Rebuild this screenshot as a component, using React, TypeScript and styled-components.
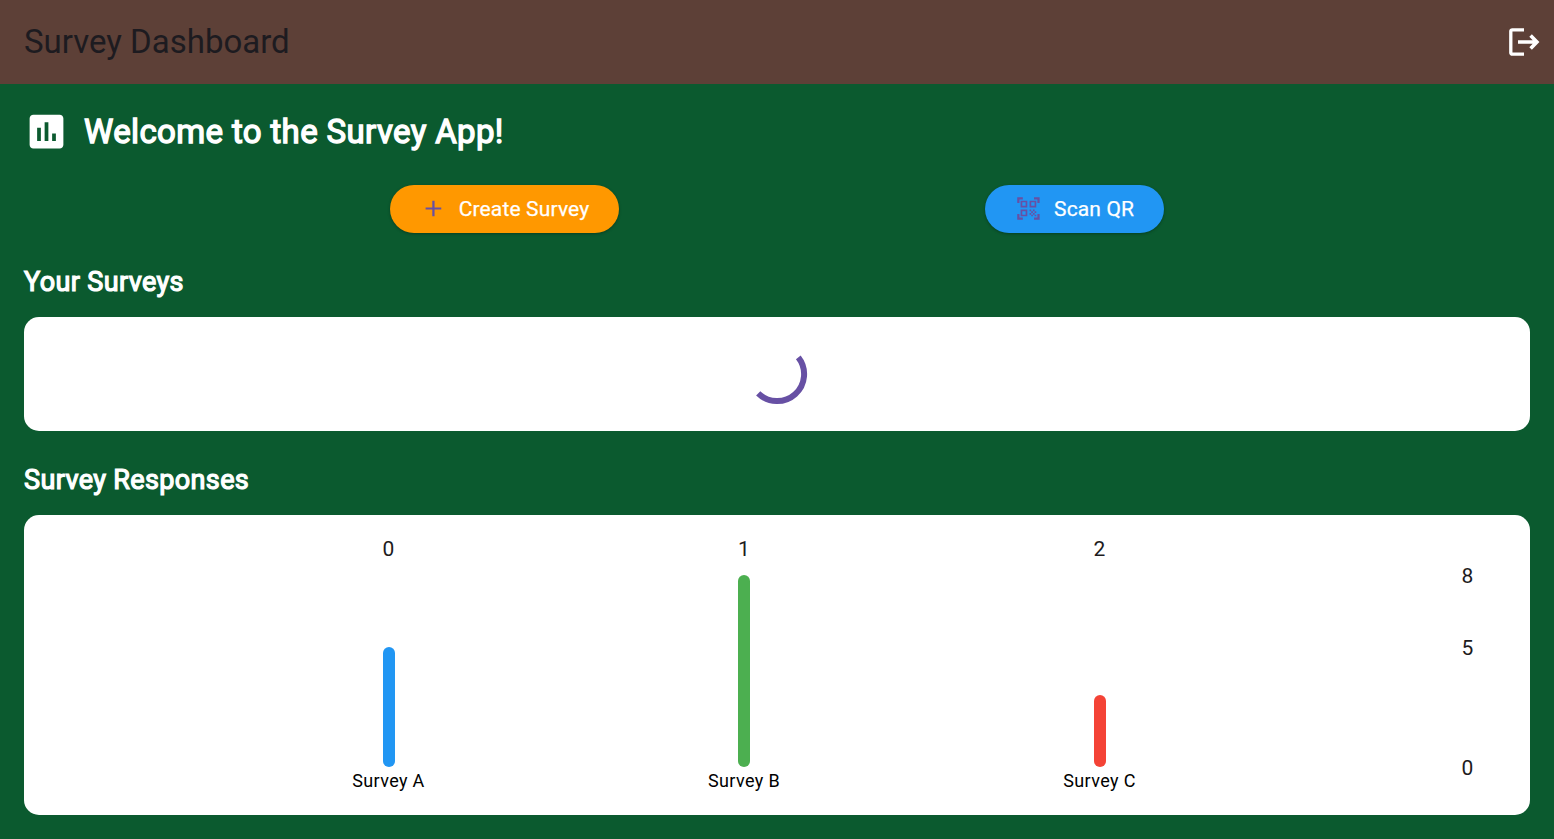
import React from "react";
import styled, { createGlobalStyle } from "styled-components";

const Global = createGlobalStyle`
  * { box-sizing: border-box; }
  body { margin: 0; background: #0b5a2f; font-family: Roboto, "Liberation Sans", sans-serif; }
`;
const Page = styled.div`
  width: 100%; height: 839px; display: flex; flex-direction: column; overflow: hidden;
  background: #0b5a2f;
`;
const AppBar = styled.header`
  height: 84px; padding: 0 12px 0 24px; display: flex; align-items: center; justify-content: space-between;
  background: #5d4037; color: #1d1b20;
`;
const Title = styled.h1`
  margin: 0; font-size: 33px; line-height: 42px; font-weight: 400; white-space: nowrap;
`;
const IconButton = styled.button`
  border: 0; padding: 0; background: none; width: 36px; height: 36px; display: flex; color: #fff;
`;
const Main = styled.main`
  padding: 24px; display: flex; flex-direction: column;
`;
const Welcome = styled.div`
  height: 47px; display: flex; align-items: center; gap: 15px; color: #fff;
`;
const WelcomeText = styled.h2`
  margin: 0; font-size: 33px; line-height: 47px; font-weight: 400; letter-spacing: 0.36px;
  -webkit-text-stroke: 1.35px #fff; white-space: nowrap;
`;
const Actions = styled.div`
  margin-top: 29px; padding-top: 0.5px; height: 49px; display: flex; justify-content: space-evenly;
`;
const Action = styled.button<{ $color: string; $width: number; $gap: number }>`
  width: ${p => p.$width}px; height: 48px; padding: 0 30px; border: 0; border-radius: 24px;
  display: flex; align-items: center; justify-content: center; gap: ${p => p.$gap}px;
  background: ${p => p.$color}; color: #fff; font: 400 21px Roboto, sans-serif; letter-spacing: 0.15px;
  -webkit-text-stroke: 0.25px #fff;
  box-shadow: 0 1px 3px rgba(0,0,0,.3); white-space: nowrap;
`;
const SectionTitle = styled.h3<{ $top: number }>`
  margin: ${p => p.$top}px 0 17px; height: 35px; font-size: 27px; line-height: 35px; font-weight: 400;
  letter-spacing: 0.36px; color: #fff; -webkit-text-stroke: 1.2px #fff;
`;
const Card = styled.section<{ $height: number }>`
  height: ${p => p.$height}px; border-radius: 15px; background: #fff; display: flex; justify-content: center;
`;
const Chart = styled.div`
  flex: 1; display: flex; padding: 20px 24px 20px; color: #1d1b20;
`;
const Bars = styled.div`
  flex: 1; display: flex; justify-content: space-evenly;
`;
const Column = styled.div`
  width: 30px; display: flex; flex-direction: column; align-items: center;
`;
const Value = styled.div`
  height: 28px; font-size: 21px; line-height: 28px;
`;
const Track = styled.div`
  height: 204px; display: flex; align-items: flex-end;
`;
const Bar = styled.div<{ $color: string }>`
  width: 12px; border-radius: 6px; background: ${p => p.$color};
`;
const Label = styled.div`
  font-size: 18px; line-height: 28px; letter-spacing: 0.35px; color: #000; white-space: nowrap;
`;
const Axis = styled.div`
  width: 66px; padding: 27px 0 0 21.5px; display: flex; flex-direction: column; font-size: 21px; line-height: 28px;
`;
const Tick = styled.div<{ $height: number }>`
  height: ${p => p.$height}px;
`;

const data = [
  { name: "Survey A", value: 5, color: "#2196f3" },
  { name: "Survey B", value: 8, color: "#4caf50" },
  { name: "Survey C", value: 3, color: "#f44336" },
];

export default function App() {
  return (
    <Page>
      <Global />
      <AppBar>
        <Title>Survey Dashboard</Title>
        <IconButton aria-label="Log out">
          <svg width="36" height="36" viewBox="0 0 36 36" fill="none" stroke="currentColor" strokeWidth="3.300">
            <path d="M18 5.800H6.300a1.500 1.500 0 0 0-1.500 1.500V28.700A1.500 1.500 0 0 0 6.300 30.200H18" />
            <path d="M12 18H30M24.600 11.600L30.900 18L24.600 24.400" strokeWidth="3.600" />
          </svg>
        </IconButton>
      </AppBar>
      <Main>
        <Welcome>
          <svg width="45" height="45" viewBox="0 0 24 24" fill="currentColor">
            <path d="M19 3H5c-1.100 0-2 .9-2 2v14c0 1.100.9 2 2 2h14c1.100 0 2-.9 2-2V5c0-1.100-.9-2-2-2zM9 17H7v-7h2v7zm4 0h-2V7h2v10zm4 0h-2v-4h2v4z" />
          </svg>
          <WelcomeText>Welcome to the Survey App!</WelcomeText>
        </Welcome>
        <Actions>
          <Action $color="#ff9800" $width={229.5} $gap={12}>
            <svg width="27" height="27" viewBox="0 0 24 24" fill="#6750a4"><path d="M19 13h-6v6h-2v-6H5v-2h6V5h2v6h6v2z" /></svg>
            Create Survey
          </Action>
          <Action $color="#2196f3" $width={179} $gap={12}>
            <svg width="27" height="27" viewBox="0 0 24 24" fill="#6750a4"><path d="M9.5 6.5v3h-3v-3h3M11 5H5v6h6V5zm-1.500 9.500v3h-3v-3h3M11 13H5v6h6v-6zm6.500-6.500v3h-3v-3h3M19 5h-6v6h6V5zm-6 8h1.500v1.500H13V13zm1.500 1.500H16V16h-1.500v-1.500zM16 13h1.500v1.500H16V13zm-3 3h1.500v1.500H13V16zm1.500 1.500H16V19h-1.500v-1.500zM16 16h1.500v1.500H16V16zm1.500-1.500H19V16h-1.500v-1.500zm0 3H19V19h-1.500v-1.500zM22 7h-2V4h-3V2h5v5zm0 15v-5h-2v3h-3v2h5zM2 22h5v-2H4v-3H2v5zM2 2v5h2V4h3V2H2z" /></svg>
            Scan QR
          </Action>
        </Actions>
        <SectionTitle $top={32}>Your Surveys</SectionTitle>
        <Card $height={114}>
          <svg width="114" height="114" viewBox="0 0 114 114" fill="none" stroke="#6750a4" strokeWidth="6">
            <path d="M78.300 40.400 A27 27 0 0 1 38.200 76.400" />
          </svg>
        </Card>
        <SectionTitle $top={32}>Survey Responses</SectionTitle>
        <Card $height={300}>
          <Chart>
            <Bars>
              {data.map((d, i) => (
                <Column key={d.name}>
                  <Value>{i}</Value>
                  <Track><Bar $color={d.color} style={{ height: d.value * 24 }} /></Track>
                  <Label>{d.name}</Label>
                </Column>
              ))}
            </Bars>
            <Axis>
              <Tick $height={72}>8</Tick>
              <Tick $height={120}>5</Tick>
              <Tick $height={28}>0</Tick>
            </Axis>
          </Chart>
        </Card>
      </Main>
    </Page>
  );
}
